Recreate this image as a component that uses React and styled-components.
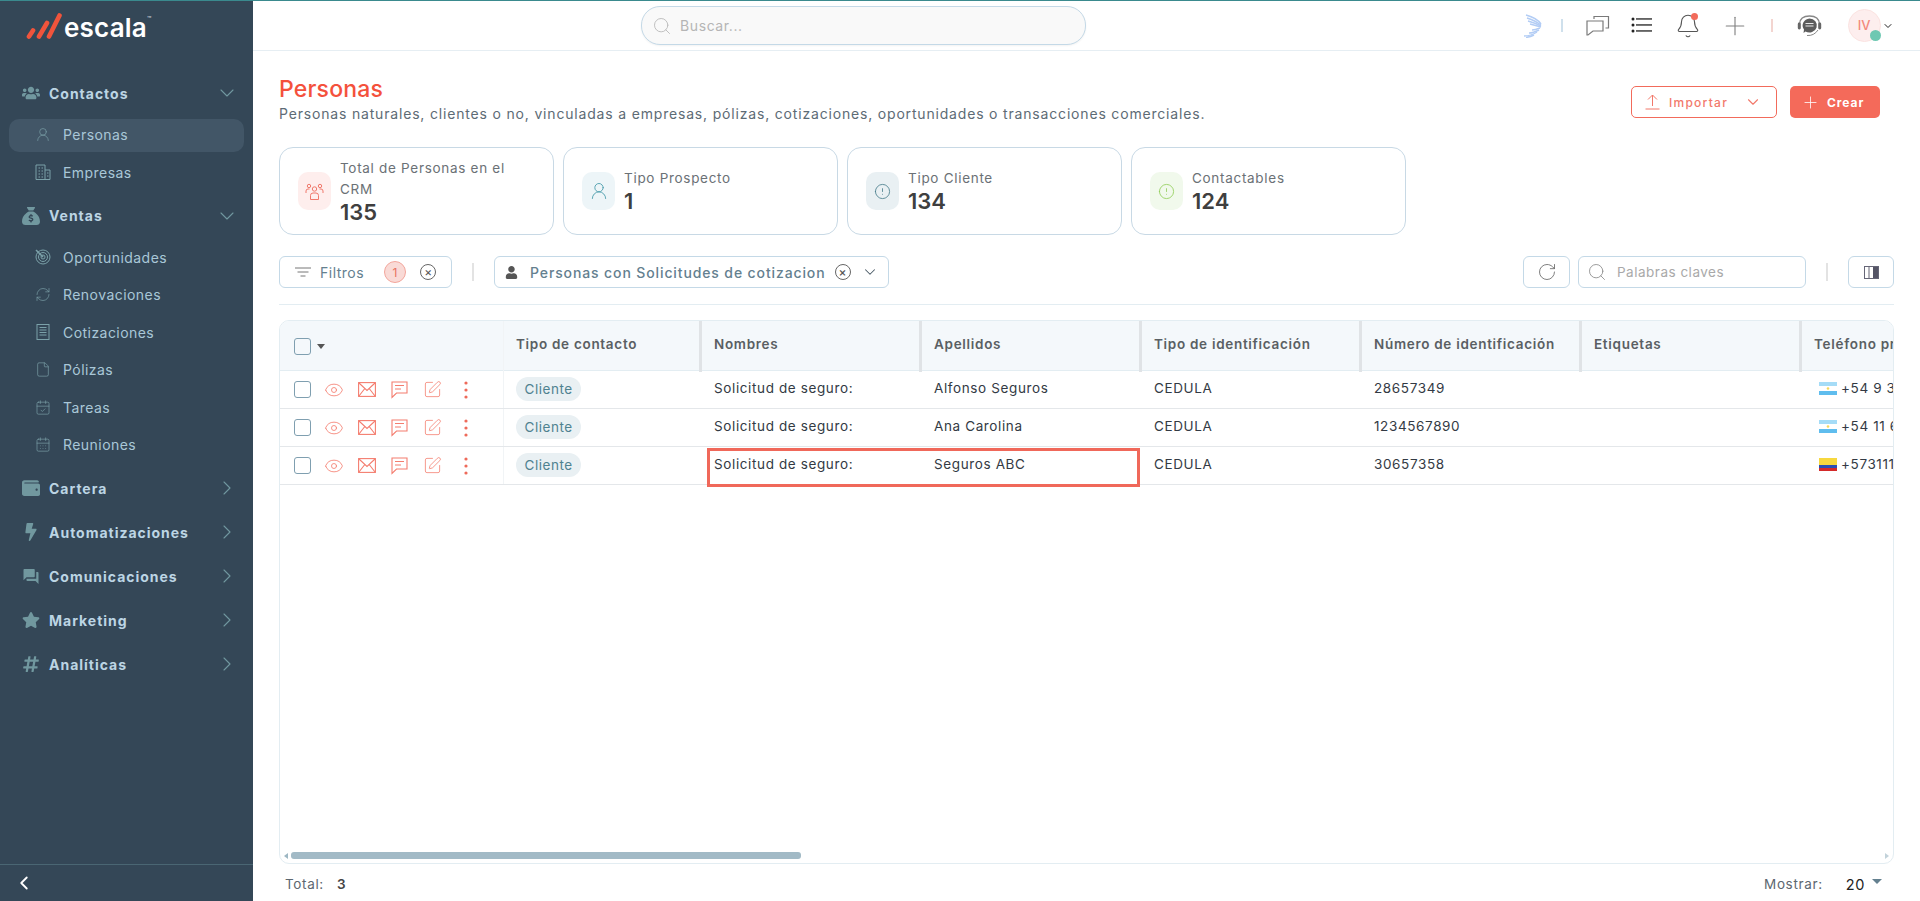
import React from "react";
import styled, { createGlobalStyle } from "styled-components";
import {
  ChevronDown, ChevronRight, ChevronLeft, UserRound, RefreshCw, File, CalendarCheck,
  CalendarDays, Search, Plus, Bell, RotateCw, Eye, SquarePen, Info,
} from "lucide-react";
import { FaUsers, FaWallet, FaBolt, FaStar, FaHashtag, FaUser } from "react-icons/fa";
import { MdForum } from "react-icons/md";
import { FaSackDollar } from "react-icons/fa6";

const Global = createGlobalStyle`
  html, body { margin: 0; padding: 0; height: 100%; overflow: hidden; background: #fff; }
  * { box-sizing: border-box; }
  body { font-family: Inter, "Noto Sans", sans-serif; color: #333; }
`;

const Root = styled.div`
  display: flex; height: 901px; border-top: 1px solid #3a8a8e;
`;

/* ---------- Sidebar ---------- */
const Sidebar = styled.aside`
  width: 253px; flex: none; background: #344757; display: flex; flex-direction: column; color: #b9d3e2;
`;
const LogoRow = styled.div`
  height: 70px; padding: 9px 0 0 26px; display: flex; align-items: flex-start; gap: 2px;
`;
const LogoMark = styled.div`
  display: flex; align-items: flex-start; color: #fff; font-weight: 600; font-size: 26px; line-height: 36px; letter-spacing: 0.2px;
`;
const Tm = styled.span`
  font-size: 7px; line-height: 20px; font-weight: 500; color: #cfd8de;
`;
const Nav = styled.nav`
  display: flex; flex-direction: column; flex: 1;
`;
const GroupRow = styled.div`
  height: 44px; display: flex; align-items: center; padding: 0 14px 0 22px; font-size: 14px; font-weight: 700; letter-spacing: 0.98px; color: #bcd5e4;
`;
const GroupIcon = styled.span`
  width: 18px; margin-right: 9px; display: flex; justify-content: center; color: #71989f; font-size: 18px;
`;
const GroupChev = styled.span`
  margin-left: auto; display: flex; color: #71989f;
`;
const SubList = styled.div`
  margin: 1px 0 3px; display: flex; flex-direction: column;
`;
const SubItem = styled.div`
  height: 37.4px; margin: 0 9px; padding-left: 26px; display: flex; align-items: center; gap: 12px; position: relative; font-size: 14px; letter-spacing: 0.45px; color: #a9c7d8; z-index: 0;
  &::before {
    content: ""; display: ${(p) => (p.$active ? "block" : "none")}; position: absolute; left: 0; right: 0; top: 3px; bottom: 1px; border-radius: 10px; background: #425667; z-index: -1;
  }
`;
const SubIcon = styled.span`
  width: 16px; display: flex; justify-content: center; color: #7ba1a9;
`;
const SideFoot = styled.div`
  height: 37px; border-top: 1px solid #4a6673; display: flex; align-items: center; padding-left: 13px; color: #fff;
`;

/* ---------- Main ---------- */
const Main = styled.main`
  flex: 1; min-width: 0; display: flex; flex-direction: column;
`;
const Topbar = styled.header`
  height: 50px; flex: none; border-bottom: 1px solid #e6eef3; display: flex; align-items: flex-start; padding: 5px 31px 0 388px;
`;
const GlobalSearch = styled.div`
  width: 445px; height: 39px; border-radius: 19px; background: #f9f9f9; border: 1px solid #c4d9e7; display: flex; align-items: center; padding-left: 10px; gap: 8px; color: #b5b5b5; font-size: 14px; letter-spacing: 0.6px; box-shadow: 0 1px 2px rgba(0,0,0,.05);
`;
const TopIcons = styled.div`
  margin-left: auto; display: flex; align-items: center; height: 39px;
`;
const Slot = styled.span`
  width: ${(p) => p.$w}px; display: flex; justify-content: center; align-items: center; position: relative; color: #808080;
`;
const Sep = styled.span`
  width: 1.5px; height: 13px; background: ${(p) => p.$c};
`;
const Dot = styled.span`
  position: absolute; width: 7px; height: 7px; border-radius: 50%; background: #f26b5b; top: 0; left: 26px;
`;
const Avatar = styled.span`
  width: 33px; height: 33px; border-radius: 50%; background: #fdeeee; border: 1px solid #fbe3e1; color: #f38a7d; font-size: 13px; font-weight: 500; display: flex; align-items: center; justify-content: center; position: relative; margin-left: 14.6px; padding-bottom: 1px;
  &::after { content: ""; position: absolute; width: 11px; height: 11px; right: -1px; bottom: 0; border-radius: 50%; background: #6ec8b2; }
`;
const AvatarChev = styled.span`
  display: flex; width: 12px; margin-left: 1.4px; margin-right: -5px; color: #222; justify-content: center;
`;
const Content = styled.div`
  flex: 1; min-height: 0; display: flex; flex-direction: column; padding: 25px 26px 0;
`;
const PageHead = styled.div`
  display: flex; justify-content: space-between; align-items: flex-start; height: 71px; flex: none;
`;
const Title = styled.h1`
  margin: 0 0 3px; font-size: 23px; line-height: 26px; font-weight: 500; color: #f4513c; letter-spacing: 0.2px;
`;
const Subtitle = styled.p`
  margin: 0; font-size: 14px; line-height: 18px; color: #5d6b75; letter-spacing: 0.82px;
`;
const Actions = styled.div`
  display: flex; gap: 13px; margin: 10px 14px 0 0;
`;
const OutlineBtn = styled.button`
  width: 146px; height: 32px; border: 1px solid #f26b5b; border-radius: 5px; background: #fff; color: #f2796b; display: flex; align-items: center; padding: 0 14px 0 13px; font: 500 12px Inter, sans-serif; letter-spacing: 1.25px;
`;
const SolidBtn = styled.button`
  width: 90px; height: 32px; border: 0; border-radius: 5px; background: #f46a5a; color: #fff; display: flex; align-items: center; gap: 7px; padding: 0 0 0 11px; font: 700 12px Inter, sans-serif; letter-spacing: 0.95px;
`;
const Cards = styled.div`
  display: flex; gap: 9px; flex: none;
`;
const Card = styled.div`
  width: 275px; height: 88px; border: 1px solid #c8d9e5; border-radius: 14px; display: flex; align-items: center; padding-left: 18px; gap: 9px;
`;
const CardIcon = styled.div`
  width: 33px; height: 38px; flex: none; border-radius: 10px; background: ${(p) => p.$bg}; color: ${(p) => p.$c}; display: flex; align-items: center; justify-content: center;
`;
const CardText = styled.div`
  max-width: 200px; padding-bottom: 2px;
`;
const CardLabel = styled.div`
  font-size: 13.5px; line-height: 21px; color: #6b7176; letter-spacing: 0.7px;
`;
const CardValue = styled.div`
  font-size: 22px; line-height: 22px; font-weight: 600; color: #3f3f3f; margin-top: 1px;
`;
const FilterRow = styled.div`
  display: flex; align-items: center; margin-top: 21px; height: 32px; flex: none;
`;
const FilterBox = styled.div`
  height: 32px; border: 1px solid #c4d9e7; border-radius: 6px; display: flex; align-items: center; color: #64808f; font-size: 14px; letter-spacing: ${(p) => p.$ls}px; font-weight: ${(p) => p.$fw || 400}; width: ${(p) => p.$w}px; padding-left: ${(p) => p.$pl}px; flex: none;
`;
const Badge = styled.span`
  width: 22px; height: 22px; border-radius: 50%; background: #f9dad6; border: 1px solid #f3a69c; color: #e8705f; font-size: 12px; display: flex; align-items: center; justify-content: center; margin: 0 14px 0 20px;
`;
const ClearX = styled.span`
  width: 16px; height: 16px; border-radius: 50%; border: 1px solid #666; color: #555; display: flex; align-items: center; justify-content: center; font-size: 12px; line-height: 1; flex: none; letter-spacing: 0;
`;
const VLine = styled.span`
  width: 2px; height: 18px; background: #e3e3e3; flex: none; margin: ${(p) => p.$m};
`;
const RightTools = styled.div`
  margin-left: auto; display: flex; align-items: center;
`;
const IconBtn = styled.div`
  width: ${(p) => p.$w}px; height: 32px; border: 1px solid #c4d9e7; border-radius: 6px; display: flex; align-items: center; justify-content: center; color: #666;
`;
const KeywordBox = styled.div`
  width: 228px; height: 32px; margin-left: 8px; border: 1px solid #c4d9e7; border-radius: 6px; display: flex; align-items: center; padding-left: 8px; gap: 10px; font-size: 13.5px; color: #a9a9a9; letter-spacing: 0.5px;
`;
const Rule = styled.hr`
  margin: 16px 0 15px; border: 0; border-top: 1px solid #e3edf2; width: 100%; flex: none;
`;
const TableWrap = styled.div`
  position: relative; width: 1615px; height: 544px; flex: none; border: 1px solid #e3edf2; border-radius: 10px; overflow: hidden; display: flex; flex-direction: column; background: #fff;
`;
const COLS = "224px 196px 220px 220px 220px 220px 220px 220px";
const HeadRow = styled.div`
  display: grid; grid-template-columns: ${COLS}; height: 50px; background: #f4f8fb; border-bottom: 1px solid #e3edf2; flex: none;
`;
const HeadCell = styled.div`
  display: flex; align-items: center; padding: 0 0 6px 14px; font-size: 13.5px; font-weight: 600; color: #5a5f63; letter-spacing: 0.7px; white-space: nowrap; overflow: hidden; height: 51px; margin-right: -2px; border-right: 3px solid #e0e3e6;
  &:nth-child(2) { padding-left: 12px; }
`;
const Row = styled.div`
  display: grid; grid-template-columns: ${COLS}; height: 38px; border-bottom: 1px solid #e4e7ea; flex: none;
`;
const Cell = styled.div`
  display: flex; align-items: center; padding: 0 0 3px 14px; font-size: 13.5px; color: #333a44; letter-spacing: 0.62px; white-space: nowrap; overflow: hidden;
  &:nth-child(2) { padding-left: 12px; }
`;
const ActionCell = styled.div`
  display: flex; align-items: center; padding: 0 0 0 14px; border-right: 1px solid #f1f4f6;
`;
const Check = styled.span`
  width: 17px; height: 17px; border: 1px solid #7f9fb0; border-radius: 3px; flex: none; margin-right: 6px;
`;
const ActIcon = styled.span`
  width: 33px; display: flex; justify-content: center; color: #f47d6f;
`;
const Caret = styled.span`
  width: 0; height: 0; border: 4px solid transparent; border-top: 5px solid #555; border-bottom: 0;
`;
const Pill = styled.span`
  height: 24px; padding: 0 8.5px; border-radius: 12px; background: #e9f0f3; color: #4f8290; font-size: 13.5px; display: flex; align-items: center; letter-spacing: 0.55px; margin-top: 1px;
`;
const Flag = styled.svg`
  width: 18px; height: 13px; margin: 0 4px 0 5px; flex: none;
`;
const Spacer = styled.div`
  flex: 1;
`;
const Scroll = styled.div`
  height: 13px; flex: none; display: flex; align-items: center; padding: 0 4px; gap: 3px; color: #9db7c3; margin-bottom: 1px;
`;
const Arrow = styled.span`
  width: 0; height: 0; border: 3px solid transparent;
  ${(p) => (p.$right ? "border-left: 4px solid #c2d2da; border-right: 0; margin-left: auto;" : "border-right: 4px solid #9db7c3; border-left: 0;")}
`;
const Thumb = styled.span`
  width: 510px; height: 7px; border-radius: 3px; background: #a2bac6;
`;
const Highlight = styled.div`
  position: absolute; left: 427px; top: 127px; width: 433px; height: 39px; border: 3px solid #f0685a; pointer-events: none;
`;
const Foot = styled.footer`
  flex: 1; display: flex; align-items: center; justify-content: space-between; padding: 2px 12px 0 6px; font-size: 13.5px; color: #5d6770; letter-spacing: 0.65px;
`;
const FootStrong = styled.b`
  font-weight: 600; color: #444; margin-left: 13px;
`;
const FootRight = styled.div`
  display: flex; align-items: center;
`;
const FootValue = styled.span`
  color: #222; margin: 2px 7px 0 23px; font-size: 14.5px;
`;
const FootCaret = styled.span`
  width: 0; height: 0; border: 5px solid transparent; border-top: 5px solid #64808f; border-bottom: 0; margin-top: -5px;
`;

/* ---------- Drawings ---------- */
const LogoBars = () => (
  <svg width="36" height="26" viewBox="0 0 36 26" style={{ marginTop: 3 }} fill="none" stroke="#f0543c" strokeWidth="4.6" strokeLinecap="round">
    <path d="M3 23.500 L7 17.500" />
    <path d="M13 23.500 L21 10" />
    <path d="M23 23.500 L33.500 2.500" />
  </svg>
);
const Bird = () => (
  <svg width="20" height="24" viewBox="0 0 20 24" fill="none" stroke="#b3cdf5" strokeWidth="1.4">
    <path d="M3 1 Q14 4 18 10" /><path d="M4 4 Q13 7 18 11" /><path d="M5 7 Q12 9 18 12" /><path d="M7 10 L18 13" />
    <path d="M17 14 Q12 16 9 16" /><path d="M16 16 Q10 19 6 19" /><path d="M14 18 Q8 22 1 22" /><path d="M11 21 Q7 23 3 23.500" />
  </svg>
);
const Chats = () => (
  <svg width="24" height="22" viewBox="0 0 24 22" fill="none" stroke="#7a7a7a" strokeWidth="1.2">
    <path d="M8 4 V1.500 H22.500 V13 H19.500" /><path d="M1 6 H17 V16 H7 L2 20 L1 20Z" />
  </svg>
);
const ListIcon = () => (
  <svg width="22" height="16" viewBox="0 0 22 16" fill="#222" style={{ marginTop: -2 }}>
    <circle cx="2" cy="2" r="1.500" /><circle cx="2" cy="8" r="1.500" /><circle cx="2" cy="14" r="1.500" />
    <rect x="5" y="1.300" width="16" height="1.300" /><rect x="5" y="7.300" width="16" height="1.300" /><rect x="5" y="13.300" width="16" height="1.300" />
  </svg>
);
const Support = () => (
  <svg width="25" height="22" viewBox="0 0 25 22" fill="none">
    <path d="M2.500 13 V9 Q3 1 12.500 1 Q22 1 22.500 9 V13" stroke="#888" strokeWidth="1.300" />
    <rect x="0.800" y="7.500" width="3" height="7" rx="1.400" fill="#666" /><rect x="21.200" y="7.500" width="3" height="7" rx="1.400" fill="#666" />
    <path d="M12.500 3.500 A7.500 7 0 1 1 8.500 16.500 L6.500 18 L7 14.500 A7.500 7 0 0 1 12.500 3.500Z" fill="#5c5c5c" />
    <path d="M8.500 8.500 H16.500 M8.500 11 H16.500" stroke="#e8e8e8" strokeWidth="1.200" />
    <path d="M10 20.500 Q17 21 21 15" stroke="#888" />
  </svg>
);
const Filter = () => (
  <svg width="16" height="10" viewBox="0 0 16 10" stroke="#777" fill="none"><path d="M0 1 H16 M2.500 5 H13.500 M5.500 9 H10.500" /></svg>
);
const Columns = () => (
  <svg width="15" height="13" viewBox="0 0 15 13"><rect x="0.500" y="0.500" width="14" height="12" fill="none" stroke="#667" /><rect x="9" y="1" width="5" height="11" fill="#556" /><path d="M5 1 V12" stroke="#667" /></svg>
);
const ImportIcon = () => (
  <svg width="15" height="16" viewBox="0 0 15 16" fill="none" stroke="currentColor" strokeWidth="1" style={{ marginRight: 9 }}>
    <path d="M7.500 12 V1 M3 5.500 L7.500 1 L12 5.500 M0.500 15 H14.500" />
  </svg>
);
const Envelope = () => (
  <svg width="18" height="15" viewBox="0 0 18 15" fill="none" stroke="currentColor" strokeWidth="1.100">
    <rect x="0.600" y="0.600" width="16.800" height="13.800" /><path d="M1 1 L9 8.500 L17 1 M1 14 L6.800 6.500 M17 14 L11.200 6.500" />
  </svg>
);
const Bubble = () => (
  <svg width="17" height="18" viewBox="0 0 17 18" fill="none" stroke="currentColor" strokeWidth="1.100">
    <path d="M1 1 H16 V12 H5.500 L1 16.500Z" /><path d="M4 4.500 H13 M4 8 H10" />
  </svg>
);
const Dots = () => (
  <svg width="4" height="18" viewBox="0 0 4 18" fill="#ee6a5a"><circle cx="2" cy="2" r="1.600" /><circle cx="2" cy="9" r="1.600" /><circle cx="2" cy="16" r="1.600" /></svg>
);
const Crowd = () => (
  <svg width="19" height="19" viewBox="0 0 19 19" fill="none" stroke="currentColor" strokeWidth="1">
    <circle cx="9.500" cy="7" r="2.200" /><path d="M5.500 17.500 V13.500 Q5.500 11 8 11 H11 Q13.500 11 13.500 13.500 V17.500Z" />
    <circle cx="4" cy="4" r="1.700" /><path d="M1 11 V9 Q1 7 3 7 H4.500" />
    <circle cx="15" cy="4" r="1.700" /><path d="M18 11 V9 Q18 7 16 7 H14.500" />
  </svg>
);
const Tower = () => (
  <svg width="16" height="16" viewBox="0 0 16 16" fill="none" stroke="currentColor" strokeWidth="1">
    <path d="M1 15.500 V1 H10 V15.500 M10 6 H15 V15.500 H1" />
    <path d="M3.500 4 H5 M6.500 4 H8 M3.500 7 H5 M6.500 7 H8 M3.500 10 H5 M6.500 10 H8 M3.500 13 H5 M6.500 13 H8 M12 9 H13.500 M12 12 H13.500" />
  </svg>
);
const Sheet = () => (
  <svg width="14" height="16" viewBox="0 0 14 16" fill="none" stroke="currentColor" strokeWidth="1">
    <rect x="1" y="0.500" width="12" height="15" /><path d="M3.500 3.500 H10.500 M3.500 6 H10.500 M3.500 8.500 H10.500 M3.500 11 H10.500" />
  </svg>
);
const FlagAr = () => (
  <Flag viewBox="0 0 18 13"><rect width="18" height="13" fill="#fff" /><rect width="18" height="4" fill="#a5dcf7" /><rect y="9" width="18" height="4" fill="#5fbdee" /><circle cx="9" cy="6.500" r="1.300" fill="#f5d95a" /></Flag>
);
const FlagCo = () => (
  <Flag viewBox="0 0 18 13"><rect width="18" height="7" fill="#f7d83f" /><rect y="7" width="18" height="3" fill="#2a4fb5" /><rect y="10" width="18" height="3" fill="#d42a2a" /></Flag>
);

function Target() {
  return (
    <svg width="16" height="16" viewBox="0 0 16 16" fill="none" stroke="currentColor" strokeWidth="1">
      <circle cx="8" cy="8" r="7" /><circle cx="8" cy="8" r="4.500" /><circle cx="8" cy="8" r="2" /><path d="M1 1 L8 8" strokeWidth="1.500" />
    </svg>
  );
}
const thin = { size: 17, strokeWidth: 1 };
const groups1 = [
  { icon: <FaUsers />, label: "Contactos", items: [
    { icon: <UserRound {...thin} />, label: "Personas", active: true },
    { icon: <Tower />, label: "Empresas" },
  ] },
  { icon: <FaSackDollar />, label: "Ventas", items: [
    { icon: <Target />, label: "Oportunidades" },
    { icon: <RefreshCw {...thin} />, label: "Renovaciones" },
    { icon: <Sheet />, label: "Cotizaciones" },
    { icon: <File {...thin} />, label: "Pólizas" },
    { icon: <CalendarCheck {...thin} />, label: "Tareas" },
    { icon: <CalendarDays {...thin} />, label: "Reuniones" },
  ] },
];
const groups2 = [
  { icon: <FaWallet />, label: "Cartera" },
  { icon: <FaBolt />, label: "Automatizaciones" },
  { icon: <MdForum style={{ fontSize: 21 }} />, label: "Comunicaciones" },
  { icon: <FaStar />, label: "Marketing" },
  { icon: <FaHashtag />, label: "Analíticas" },
];
const alert = { size: 17, strokeWidth: 1.200, style: { transform: "rotate(180deg)" } };
const cards = [
  { icon: <Crowd />, bg: "#feeeed", c: "#f0796c", label: "Total de Personas en el CRM", value: "135" },
  { icon: <UserRound size={20} strokeWidth={1.100} />, bg: "#edf5f8", c: "#4f9fae", label: "Tipo Prospecto", value: "1" },
  { icon: <Info {...alert} />, bg: "#e9f0f3", c: "#4b7f8e", label: "Tipo Cliente", value: "134" },
  { icon: <Info {...alert} />, bg: "#f1f9ec", c: "#93cf5c", label: "Contactables", value: "124" },
];
const heads = ["Tipo de contacto", "Nombres", "Apellidos", "Tipo de identificación", "Número de identificación", "Etiquetas", "Teléfono principal"];
const rows = [
  { last: "Alfonso Seguros", id: "28657349", flag: <FlagAr />, phone: "+54 9 3512345678" },
  { last: "Ana Carolina", id: "1234567890", flag: <FlagAr />, phone: "+54 11 65432198" },
  { last: "Seguros ABC", id: "30657358", flag: <FlagCo />, phone: "+573111111111" },
];

export default function App() {
  return (
    <>
      <Global />
      <Root>
        <Sidebar>
          <LogoRow>
            <LogoBars />
            <LogoMark>escala<Tm>™</Tm></LogoMark>
          </LogoRow>
          <Nav>
            {groups1.map((g) => (
              <React.Fragment key={g.label}>
                <GroupRow>
                  <GroupIcon>{g.icon}</GroupIcon>{g.label}
                  <GroupChev><ChevronDown size={24} strokeWidth={1.100} /></GroupChev>
                </GroupRow>
                <SubList>
                  {g.items.map((it) => (
                    <SubItem key={it.label} $active={it.active}>
                      <SubIcon>{it.icon}</SubIcon>{it.label}
                    </SubItem>
                  ))}
                </SubList>
              </React.Fragment>
            ))}
            {groups2.map((g) => (
              <GroupRow key={g.label}>
                <GroupIcon>{g.icon}</GroupIcon>{g.label}
                <GroupChev><ChevronRight size={24} strokeWidth={1.100} /></GroupChev>
              </GroupRow>
            ))}
          </Nav>
          <SideFoot><ChevronLeft size={22} strokeWidth={2} /></SideFoot>
        </Sidebar>
        <Main>
          <Topbar>
            <GlobalSearch><Search size={20} strokeWidth={1} />Buscar...</GlobalSearch>
            <TopIcons>
              <Slot $w={28}><Bird /></Slot>
              <Slot $w={30}><Sep $c="#cfe0ec" /></Slot>
              <Slot $w={42}><Chats /></Slot>
              <Slot $w={46}><ListIcon /></Slot>
              <Slot $w={46}><Bell size={26} strokeWidth={1} color="#555" /><Dot /></Slot>
              <Slot $w={48}><Plus size={30} strokeWidth={0.900} /></Slot>
              <Slot $w={26}><Sep $c="#f3d5d0" /></Slot>
              <Slot $w={48}><Support /></Slot>
              <Avatar>IV</Avatar>
              <AvatarChev><ChevronDown size={12} strokeWidth={2} /></AvatarChev>
            </TopIcons>
          </Topbar>
          <Content>
            <PageHead>
              <div>
                <Title>Personas</Title>
                <Subtitle>Personas naturales, clientes o no, vinculadas a empresas, pólizas, cotizaciones, oportunidades o transacciones comerciales.</Subtitle>
              </div>
              <Actions>
                <OutlineBtn>
                  <ImportIcon />Importar
                  <ChevronDown size={18} strokeWidth={1.500} style={{ marginLeft: "auto" }} />
                </OutlineBtn>
                <SolidBtn><Plus size={19} strokeWidth={1} />Crear</SolidBtn>
              </Actions>
            </PageHead>
            <Cards>
              {cards.map((c) => (
                <Card key={c.label}>
                  <CardIcon $bg={c.bg} $c={c.c}>{c.icon}</CardIcon>
                  <CardText>
                    <CardLabel>{c.label}</CardLabel>
                    <CardValue>{c.value}</CardValue>
                  </CardText>
                </Card>
              ))}
            </Cards>
            <FilterRow>
              <FilterBox $w={173} $pl={15} $ls={0.5}>
                <Filter /><span style={{ marginLeft: 9 }}>Filtros</span><Badge>1</Badge><ClearX>×</ClearX>
              </FilterBox>
              <VLine $m="0 20px" />
              <FilterBox $w={395} $pl={10} $fw={500} $ls={0.88}>
                <FaUser size={13} color="#555" style={{ marginRight: 12 }} />Personas con Solicitudes de cotizacion
                <ClearX style={{ marginLeft: 9 }}>×</ClearX>
                <ChevronDown size={18} strokeWidth={1.400} color="#4a5a66" style={{ marginLeft: 10 }} />
              </FilterBox>
              <RightTools>
                <IconBtn $w={47}><RotateCw size={20} strokeWidth={1} /></IconBtn>
                <KeywordBox><Search size={20} strokeWidth={1} color="#888" />Palabras claves</KeywordBox>
                <VLine $m="0 20px" />
                <IconBtn $w={46}><Columns /></IconBtn>
              </RightTools>
            </FilterRow>
            <Rule />
            <TableWrap>
              <HeadRow>
                <ActionCell><Check /><Caret /></ActionCell>
                {heads.map((h) => <HeadCell key={h}>{h}</HeadCell>)}
              </HeadRow>
              {rows.map((r) => (
                <Row key={r.last}>
                  <ActionCell>
                    <Check />
                    <ActIcon><Eye size={20} strokeWidth={1} /></ActIcon>
                    <ActIcon><Envelope /></ActIcon>
                    <ActIcon><Bubble /></ActIcon>
                    <ActIcon><SquarePen size={19} strokeWidth={1} /></ActIcon>
                    <ActIcon><Dots /></ActIcon>
                  </ActionCell>
                  <Cell><Pill>Cliente</Pill></Cell>
                  <Cell>Solicitud de seguro:</Cell>
                  <Cell>{r.last}</Cell>
                  <Cell>CEDULA</Cell>
                  <Cell>{r.id}</Cell>
                  <Cell />
                  <Cell>{r.flag}{r.phone}</Cell>
                </Row>
              ))}
              <Spacer />
              <Scroll><Arrow /><Thumb /><Arrow $right /></Scroll>
              <Highlight />
            </TableWrap>
            <Foot>
              <span>Total:<FootStrong>3</FootStrong></span>
              <FootRight>Mostrar:<FootValue>20</FootValue><FootCaret /></FootRight>
            </Foot>
          </Content>
        </Main>
      </Root>
    </>
  );
}
